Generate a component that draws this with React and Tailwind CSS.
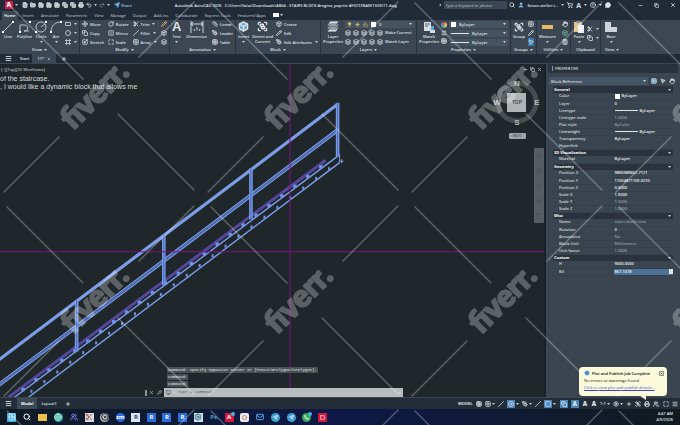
import React from 'react';
import {
  Search, User, ShoppingCart, MessageCircle, Minus, Copy, X, Menu, Plus, Wrench, Settings,
  Send, File, FolderOpen, Save, Printer, Undo2, Redo2, Move, RotateCw, FlipHorizontal, Scaling,
  Scissors, Grid2x2, Grid3x3, Pencil, Layers, Sun, Lightbulb, LockOpen, Clipboard, Ruler, Maximize,
  Group, Box, Hand, Square, Table, Circle, Globe, Users, Monitor, Mail, Phone, Disc, Frame,
  CircleHelp, Calculator, PenTool, Slash, RectangleHorizontal, MousePointer2, Image, Info,
} from 'lucide-react';

const Caret = ({ className = '' }) => (
  <svg viewBox="0 0 6 4" className={`w-[3px] h-[2px] shrink-0 fill-[#c6cfd5] ${className}`}>
    <path d="M0 0h6L3 4z" />
  </svg>
);

const Tiny = ({ icon: Icon, className = 'size-[6px]' }) => (
  <Icon strokeWidth={3} className={`shrink-0 ${className}`} />
);

const quickAccess = [File, FolderOpen, Save, Save, Save, Copy, Copy, Printer];

/* Title bar with quick access tools, file name and account area */
const TitleBar = () => (
  <header className="flex items-center h-[10px] pl-[5px] pr-[4px] bg-[#212b37]">
    <button aria-label="Application menu" className="w-[8px] h-[8px] bg-[#d9154a] text-white text-[7px] leading-[8px] font-bold text-center">A</button>
    <Caret className="ml-[2px]" />
    <div className="flex items-center gap-[2px] ml-[4px] text-[#dbe1e4]">
      {quickAccess.map((icon, i) => (
        <button key={i} aria-label={`Quick tool ${i + 1}`}><Tiny icon={icon} className="size-[6px] fill-[#aab4ba]" /></button>
      ))}
      <button aria-label="Undo"><Tiny icon={Undo2} /></button>
      <Caret />
      <button aria-label="Redo" className="text-[#7d8890]"><Tiny icon={Redo2} /></button>
      <Caret />
    </div>
    <button className="flex items-center gap-[1px] ml-[4px] text-[#8fc4e8]">
      <Send className="size-[6px] fill-[#6fb7e8] text-[#6fb7e8]" />Share
    </button>
    <div className="flex-1 flex justify-center gap-[3px] whitespace-nowrap text-[#dfe4e8]">
      <span>Autodesk AutoCAD 2026</span>
      <span>C:\Users\faisa\Downloads\AB04 - STAIRS BLOCK #regina_papritz #F0722BA5E1303\11.dwg</span>
    </div>
    <Caret className="-rotate-90 mr-[2px]" />
    <input aria-label="Search" placeholder="Type a keyword or phrase" className="w-[63px] h-[8px] px-[1px] bg-[#3b4754] italic placeholder:text-[#9ca7b0]" />
    <div className="flex items-center gap-[3px] ml-[2px] text-[#dbe1e4]">
      <Tiny icon={Search} />
      <User className="size-[6px] fill-[#8cc4ee] text-[#8cc4ee]" />
      <span>faizan.atelier.i...</span>
      <Caret />
      <Tiny icon={ShoppingCart} />
      <span className="text-[7px] font-bold leading-none">A</span>
      <Caret />
      <Tiny icon={CircleHelp} />
      <Caret />
      <Tiny icon={MessageCircle} className="size-[6px] fill-[#dbe1e4]" />
    </div>
    <div className="flex items-center gap-[11px] ml-[27px] text-[#e5eaed]">
      <button aria-label="Minimize"><Tiny icon={Minus} className="size-[5px]" /></button>
      <button aria-label="Restore"><Tiny icon={Copy} className="size-[5px]" /></button>
      <button aria-label="Close"><Tiny icon={X} className="size-[6px]" /></button>
    </div>
  </header>
);

const menus = ['Insert', 'Annotate', 'Parametric', 'View', 'Manage', 'Output', 'Add-ins', 'Collaborate', 'Express Tools', 'Featured Apps'];

const MenuTabs = () => (
  <nav className="flex items-center gap-[7px] h-[10px] pl-[2px] bg-[#212b37] text-[#a3adb6]">
    <button className="h-[9px] px-[2px] self-end bg-[#3b4754] text-white -mr-[2px]">Home</button>
    {menus.map((m) => <button key={m}>{m}</button>)}
    <button aria-label="Ribbon display" className="flex items-center gap-[1px]">
      <span className="w-[6px] h-[4px] bg-white" /><Caret />
    </button>
  </nav>
);

const Panel = ({ title, children, caret = true }) => (
  <section className="flex flex-col min-w-0 border-r border-[#29333e]">
    <div className="flex h-[26px] items-center justify-between px-[2px] gap-[2px]">{children}</div>
    <h2 className="flex items-center justify-center gap-[2px] h-[7px]">{title}{caret && <Caret />}</h2>
  </section>
);

const BigTool = ({ label, children, caret }) => (
  <button className="flex flex-col items-center h-[24px] gap-[2px] whitespace-pre leading-[5px] text-center">
    <span className="h-[11px] flex items-center">{children}</span>
    {label}
    {caret && <Caret />}
  </button>
);

const SmallTool = ({ icon, label, caret }) => (
  <button aria-label={label || 'Tool'} className="flex items-center gap-[2px] h-[8px] whitespace-nowrap">
    <Tiny icon={icon} />{label}{caret && <Caret className="ml-[1px]" />}
  </button>
);

const Column = ({ children }) => <div className="flex flex-col items-start gap-[1px]">{children}</div>;

const ShapeIcon = ({ kind }) => (
  <svg viewBox="0 0 12 12" className="size-[12px] fill-none stroke-[#bcc6cc]">
    {kind === 'line' && <path d="M1 11 11 1" />}
    {kind === 'poly' && <path d="M1 11V4h4c5 0 5 6 0 6h5" />}
    {kind === 'circle' && <><circle cx="6" cy="6" r="5" /><path d="M6 6l4-3" /></>}
    {kind === 'arc' && <path d="M1 11C1 5 5 1 11 1" />}
    <g className="fill-white stroke-none">
      <rect x="0" y="10" width="2" height="2" /><rect x="10" y="0" width="2" height="2" />
    </g>
  </svg>
);

const Dropdown = ({ label, children }) => (
  <div className="flex items-center h-[7px] w-full bg-[#465360] pl-[2px] gap-[3px]">
    {children}
    <select aria-label={label} className="flex-1 min-w-0 appearance-none bg-transparent"><option>{label === 'Layer' ? '0' : 'ByLayer'}</option></select>
    <Caret className="mr-[2px]" />
  </div>
);

const Ribbon = () => (
  <div className="grid grid-cols-[80fr_90fr_66fr_85fr_96fr_94fr_26fr_34fr_30fr_79fr] h-[34px] bg-[#3b4652] text-[#dde3e7]">
    <Panel title="Draw">
      <BigTool label="Line"><ShapeIcon kind="line" /></BigTool>
      <BigTool label="Polyline"><ShapeIcon kind="poly" /></BigTool>
      <BigTool label="Circle" caret><ShapeIcon kind="circle" /></BigTool>
      <BigTool label="Arc" caret><ShapeIcon kind="arc" /></BigTool>
      <Column>
        <SmallTool icon={RectangleHorizontal} caret />
        <SmallTool icon={Circle} caret />
        <SmallTool icon={Frame} caret />
      </Column>
    </Panel>
    <Panel title="Modify">
      <Column>
        <SmallTool icon={Move} label="Move" />
        <SmallTool icon={Copy} label="Copy" />
        <SmallTool icon={Scaling} label="Stretch" />
      </Column>
      <Column>
        <SmallTool icon={RotateCw} label="Rotate" />
        <SmallTool icon={FlipHorizontal} label="Mirror" />
        <SmallTool icon={Maximize} label="Scale" />
      </Column>
      <Column>
        <SmallTool icon={Scissors} label="Trim" caret />
        <SmallTool icon={Slash} label="Fillet" caret />
        <SmallTool icon={Grid2x2} label="Array" caret />
      </Column>
      <Column>
        <span className="text-[#f2b865]"><SmallTool icon={Pencil} /></span>
        <SmallTool icon={Box} />
        <SmallTool icon={Layers} />
      </Column>
    </Panel>
    <Panel title="Annotation">
      <BigTool label="Text" caret><span className="font-['Liberation_Sans',sans-serif] text-[13px] font-bold leading-[14px]">A</span></BigTool>
      <BigTool label="Dimension">
        <svg viewBox="0 0 14 12" className="w-[14px] h-[12px] fill-none stroke-[#cdd5da]">
          <path d="M1 0v12M13 0v12M1 3h12M3 1 1 3l2 2M11 1l2 2-2 2M4 8l1 2M7 6v3M10 8l-1 2" />
        </svg>
      </BigTool>
      <Column>
        <SmallTool icon={Ruler} label="Linear" />
        <SmallTool icon={PenTool} label="Leader" />
        <SmallTool icon={Table} label="Table" />
      </Column>
    </Panel>
    <Panel title="Block">
      <BigTool label="Insert" caret><Tiny icon={Box} className="size-[11px] fill-[#6aa9d4]" /></BigTool>
      <BigTool label={'Detect and\nConvert'}><Tiny icon={Group} className="size-[11px]" /></BigTool>
      <Column>
        <SmallTool icon={Box} label="Create" />
        <SmallTool icon={Pencil} label="Edit" />
        <SmallTool icon={PenTool} label="Edit Attributes" caret />
      </Column>
    </Panel>
    <Panel title="Layers">
      <BigTool label={'Layer\nProperties'}>
        <svg viewBox="0 0 12 12" className="size-[12px] fill-[#d6dde1] stroke-[#3b4652]">
          <path d="M3 6h9l-3 5H0zM3 3h9L9 8H0zM3 0h9L9 5H0z" strokeWidth=".8" />
        </svg>
      </BigTool>
      <div className="flex-1 flex flex-col gap-[1px]">
        <Dropdown label="Layer">
          <Lightbulb className="size-[5px] fill-[#f2d062] text-[#f2d062]" />
          <Sun className="size-[5px] fill-[#f2d062] text-[#f2d062]" />
          <LockOpen className="size-[5px] text-[#f2d062]" />
          <span className="size-[5px] bg-white" />
        </Dropdown>
        {['Make Current', 'Match Layer'].map((label) => (
          <div key={label} className="flex items-center gap-[2px]">
            {[Layers, Layers, Layers, Layers].map((icon, i) => <SmallTool key={i} icon={icon} />)}
            <SmallTool icon={Layers} label={label} />
          </div>
        ))}
      </div>
    </Panel>
    <Panel title="Properties">
      <BigTool label={'Match\nProperties'}>
        <svg viewBox="0 0 12 12" className="size-[12px]">
          <path d="M1 1h7v9H1z" fill="#d6dde1" /><path d="M2 3h5M2 5h3" stroke="#59646e" />
          <path d="M8 5h3v4H8z" fill="#5ba3d6" /><path d="M7 9h5v3H7z" fill="#d6dde1" />
        </svg>
      </BigTool>
      <div className="flex flex-col gap-[2px] items-center">
        <span className="size-[6px] rounded-full bg-[conic-gradient(#e84b4b,#f2d062,#58b868,#4a90e2,#e84b4b)]" />
        <Tiny icon={Menu} /><Tiny icon={Table} />
      </div>
      <div className="flex-1 flex flex-col gap-[2px]">
        <Dropdown label="Object color"><span className="size-[5px] bg-white" /></Dropdown>
        <Dropdown label="Lineweight"><span className="w-[18px] h-px bg-[#dde3e7]" /></Dropdown>
        <Dropdown label="Linetype"><span className="w-[18px] h-px bg-[#dde3e7]" /></Dropdown>
      </div>
    </Panel>
    <Panel title="Groups">
      <BigTool label="Group"><Tiny icon={Group} className="size-[10px]" /></BigTool>
      <Column>
        <SmallTool icon={Grid2x2} />
        <SmallTool icon={Pencil} />
        <span className="bg-[#3f7cae]"><SmallTool icon={MousePointer2} /></span>
      </Column>
    </Panel>
    <Panel title="Utilities">
      <BigTool label="Measure" caret><span className="w-[11px] h-[4px] bg-[#e6bb62]" /></BigTool>
      <Column>
        <SmallTool icon={Hand} />
        <span className="text-[#66c39a]"><SmallTool icon={Box} /></span>
        <SmallTool icon={Calculator} />
      </Column>
    </Panel>
    <Panel title="Clipboard" caret={false}>
      <BigTool label="Paste" caret>
        <svg viewBox="0 0 12 12" className="size-[12px]">
          <path d="M1 1h8v10H1z" fill="#e0c68c" /><path d="M3 0h4v2H3z" fill="#8b949b" /><path d="M5 4h6v8H5z" fill="#eef1f3" />
        </svg>
      </BigTool>
      <Column>
        <SmallTool icon={Scissors} caret />
        <SmallTool icon={Copy} caret />
      </Column>
    </Panel>
    <section className="flex flex-col items-start pl-[4px]">
      <div className="flex h-[26px] items-center">
        <BigTool label="Base" caret>
          <svg viewBox="0 0 12 10" className="w-[12px] h-[10px] fill-[#cbd3d8]"><path d="M0 0h6v5h6v5H0z" /></svg>
        </BigTool>
      </div>
      <h2 className="flex items-center gap-[2px] h-[7px]">View<Caret /></h2>
    </section>
  </div>
);

const FileTabs = () => (
  <div className="flex items-center h-[10px] pl-[5px] bg-[#212b37] border-b border-[#3b4754] text-[#dde3e7]">
    <button aria-label="File menu"><Tiny icon={Menu} className="size-[7px]" /></button>
    <button className="ml-[8px] font-semibold">Start</button>
    <div className="flex items-center gap-[3px] h-[9px] px-[5px] ml-[3px] bg-[#3b4754]">
      <button>11*</button>
      <button aria-label="Close tab"><Tiny icon={X} className="size-[4px]" /></button>
    </div>
    <button aria-label="New tab" className="ml-[5px]"><Tiny icon={Plus} className="size-[6px]" /></button>
  </div>
);

const steps = Array.from({ length: 25 }, (_, i) => i);

/* Staircase elevation with railing, in drawing coordinates */
const Staircase = () => (
  <svg viewBox="0 64 543 333" preserveAspectRatio="xMinYMin slice" className="absolute inset-0 w-full h-full fill-none">
    <path d="M325 160 8 397" stroke="#54479c" strokeWidth="3" />
    <g stroke="#7c9de6">
      <path d="M-2 360 338 103.500" strokeWidth="3.200" />
      <path d="M-2 385 337 130" strokeWidth="4" />
      <path d="M-2 385 337 130" stroke="#253c78" strokeWidth="1.600" />
      <path d="M-2 385 337 130" strokeWidth=".7" />
      <path d="M338.500 155 14 397M339 162.500 28 397" strokeWidth="1.400" />
      <path d="M337 103v53M250.500 168v51M163.500 235v50M76.500 300v51" strokeWidth="3.600" />
      <path d="M337 103v53M250.500 168v51M163.500 235v50M76.500 300v51" stroke="#4567bb" strokeWidth="1" />
      <path d="M339 154v8M338 161h5M341 159v4" />
    </g>
    {steps.map((i) => (
      <g key={i} fill="#6d92e6">
        <rect x={318.5 - i * 12.92} y={165 + i * 9.66} width="3.400" height="3.400" />
        <rect x={327.5 - i * 12.92} y={167 + i * 9.66} width="2" height="3" />
      </g>
    ))}
    <path d="M289.500 64v333M0 251.500h543" stroke="#7a1086" />
  </svg>
);

const ViewCube = () => (
  <div className="absolute right-[2px] top-[13px] w-[50px] flex flex-col items-center text-[#aeb5b8]">
    <svg viewBox="0 0 50 50" className="w-[50px] h-[50px] fill-none">
      <circle cx="25" cy="25" r="19" stroke="#454d51" strokeWidth="5" />
      <rect x="15" y="16" width="19" height="19" fill="#aeb3b5" />
      <g fill="#b7bec1" fontFamily="Liberation Sans, sans-serif" fontSize="8" fontWeight="bold" textAnchor="middle">
        <text x="25" y="9">N</text><text x="25" y="48">S</text>
        <text x="5" y="28">W</text><text x="45" y="28">E</text>
        <text x="25" y="27" fontSize="5" fill="#4a5154">TOP</text>
      </g>
    </svg>
    <button className="w-[17px] h-[6px] mt-[6px] rounded-[1px] bg-[#9da3a5] text-[#50585b] leading-[6px]">WCS</button>
  </div>
);

const CommandLine = () => (
  <div className="absolute left-[145px] right-[141px] bottom-0 font-['Liberation_Mono',monospace] font-normal">
    <div className="ml-[22px] flex flex-col items-start text-[#e2e6e8] leading-[6px] gap-[1px] mb-[1px] whitespace-nowrap">
      <p className="px-px bg-[#4a5154]">Command: Specify opposite corner or [Fence/WPolygon/CPolygon]:</p>
      <p className="px-px bg-[#4a5154]">Command:</p>
      <p className="px-px bg-[#4a5154]">Command:</p>
    </div>
    <div className="flex items-center h-[9px] text-[#b5bcbf]">
      <span className="w-[2px] h-[6px] bg-[#8c9497]" />
      <button aria-label="Close command line" className="ml-[2px]"><Tiny icon={X} className="size-[5px]" /></button>
      <button aria-label="Customize" className="ml-[3px]"><Tiny icon={Wrench} className="size-[5px]" /></button>
      <div className="flex-1 flex items-center h-full ml-[2px] px-[2px] gap-[2px] bg-[#b7bdbe] text-[#555d60]">
        <Tiny icon={Monitor} className="size-[5px]" />
        <Caret className="fill-[#555d60]" />
        <input aria-label="Command" placeholder="Type a command" className="flex-1 bg-transparent italic placeholder:text-[#5c6466]" />
        <Caret className="fill-[#555d60] rotate-180" />
      </div>
    </div>
  </div>
);

const Canvas = () => (
  <main className="relative flex-1 min-w-0 overflow-hidden bg-[#20272b]">
    <Staircase />
    <div className="relative pt-[3px] text-[#d5dadc]">
      <p className="pl-px leading-[6px] text-[#b5bbbe]">[−][Top][2D Wireframe]</p>
      <div className="mt-[2px] font-['Liberation_Sans',sans-serif] font-normal text-[7px] leading-[8px]">
        <p>of the staircase.</p>
        <p>, I would like a dynamic block that allows me</p>
      </div>
    </div>
    <div className="absolute right-[2px] top-[3px] flex gap-[2px] text-[#c9cfd2]">
      <Tiny icon={Minus} className="size-[5px]" />
      <Tiny icon={Copy} className="size-[5px]" />
      <Tiny icon={X} className="size-[5px]" />
    </div>
    <ViewCube />
    <div className="absolute right-0 top-[84px] w-[10px] h-[75px] rounded-[1px] bg-[#575e61] text-[#4b5255] flex flex-col items-center justify-around">
      {[Disc, Hand, Search, Move, Square].map((icon, i) => <Tiny key={i} icon={icon} className="size-[6px]" />)}
    </div>
    <CommandLine />
  </main>
);

const groups = [
  { name: 'General', rows: [
    ['Color', 'ByLayer', 'swatch'], ['Layer', '0'], ['Linetype', 'ByLayer', 'line'], ['Linetype scale', '1.0000', 'dim'],
    ['Plot style', 'ByColor', 'dim'], ['Lineweight', 'ByLayer', 'line'], ['Transparency', 'ByLayer'], ['Hyperlink', ''],
  ] },
  { name: '3D Visualization', rows: [['Material', 'ByLayer']] },
  { name: 'Geometry', rows: [
    ['Position X', '9890589662.7121'], ['Position Y', '11034871105.0220'], ['Position Z', '0.0000'],
    ['Scale X', '1.5000'], ['Scale Y', '1.0000', 'dim'], ['Scale Z', '1.0000', 'dim'],
  ] },
  { name: 'Misc', rows: [
    ['Name', 'stairs block new', 'dim'], ['Rotation', '0'], ['Annotative', 'No', 'dim'],
    ['Block Unit', 'Millimeters', 'dim'], ['Unit factor', '1.0000', 'dim'],
  ] },
  { name: 'Custom', rows: [['H', '9000.0000'], ['B3', '867.1078', 'active']] },
];

const PropertiesPanel = () => (
  <aside className="w-1/5 flex flex-col pl-[7px] pr-[7px] border-l-2 border-[#17212b] bg-[#3a4550] text-[#d5dbdf]">
    <h2 className="h-[9px] leading-[9px] -mx-[5px] pl-[4px] bg-[#27323d]"><span className="border-l border-[#8b959c] pl-[2px]">PROPERTIES</span></h2>
    <div className="flex items-center gap-[3px] mt-[4px] mb-[1px] -ml-[4px] -mr-[2px]">
      <div className="flex flex-1 min-w-0 items-center h-[8px] pl-[2px] pr-[2px] bg-[#465565]">
        <select aria-label="Selection" className="flex-1 min-w-0 appearance-none"><option>Block Reference</option></select>
        <Caret />
      </div>
      <Tiny icon={Image} className="size-[6px] fill-[#569ccb]" />
      <Tiny icon={MousePointer2} className="size-[6px] fill-[#6fc59a]" />
      <Tiny icon={Hand} className="size-[6px]" />
    </div>
    <table className="w-full table-fixed border-collapse leading-[6px]">
      {groups.map((g) => (
        <tbody key={g.name}>
          <tr className="h-[7px] bg-[#29323d] text-white">
            <th colSpan={2} scope="colgroup" className="p-0 text-left font-bold">
              <div className="flex items-center justify-between pl-px pr-[2px]">{g.name}<Caret /></div>
            </th>
          </tr>
          {g.rows.map(([label, value, kind]) => (
            <tr key={label} className="h-[7px]">
              <th scope="row" className="w-1/2 p-0 pl-[6px] text-left font-semibold border-b border-[#34404a] whitespace-nowrap">{label}</th>
              <td className={`p-0 pl-px border-b border-l border-[#34404a] whitespace-nowrap ${kind === 'dim' ? 'text-[#929da5]' : 'text-[#eef1f3]'} ${kind === 'active' ? 'bg-[#4c7298]' : ''}`}>
                <div className="flex items-center gap-[2px]">
                  {kind === 'swatch' && <span className="size-[5px] bg-white" />}
                  {kind === 'line' && <span className="w-[23px] h-px bg-[#dfe4e7]" />}
                  {value}
                  {kind === 'active' && <span className="ml-auto w-[4px] h-[5px] bg-[#dfe4e7]" />}
                </div>
              </td>
            </tr>
          ))}
        </tbody>
      ))}
    </table>
  </aside>
);

const statusTools = [
  { icon: Grid3x3 }, { icon: Grid2x2, caret: true }, { icon: Slash }, { icon: Disc, on: true, caret: true },
  { icon: PenTool, caret: true }, { icon: Slash }, { icon: Square, on: true, caret: true }, { icon: Copy, on: true },
  { text: 'A', on: true }, { text: 'A' }, { text: 'A' }, { label: '1:1', caret: true }, { icon: Settings, caret: true },
  { icon: Plus }, { icon: Group }, { icon: Printer }, { icon: Users }, { icon: Maximize }, { icon: Menu },
];

const StatusBar = () => (
  <footer className="relative flex items-center h-[12px] pl-[5px] pr-[2px] bg-[#222d37] border-t border-[#3a454f] text-[#dce2e6]">
    <button aria-label="Layouts"><Tiny icon={Menu} className="size-[7px]" /></button>
    <button className="h-full px-[4px] ml-[5px] bg-[#3c4853] font-bold text-white">Model</button>
    <button className="ml-[4px]">Layout1</button>
    <button aria-label="Add layout" className="ml-[8px]"><Tiny icon={Plus} className="size-[6px]" /></button>
    <div className="ml-auto w-[220px] flex items-center justify-between">
      <button className="font-bold">MODEL</button>
      {statusTools.map((t, i) => (
        <span key={i} className="flex items-center gap-[1px]">
          <button aria-label={`Status tool ${i + 1}`} className={t.on ? 'p-px bg-[#4a86be]' : ''}>
            {t.icon && <Tiny icon={t.icon} className="size-[6px]" />}
            {t.text && <b className="block w-[6px] text-[6px] leading-[6px]">{t.text}</b>}
            {t.label}
          </button>
          {t.caret && <Caret />}
        </span>
      ))}
    </div>
    <div role="status" className="absolute right-[13px] bottom-[13px] w-[88px] h-[29px] pl-[5px] pr-[3px] pt-[3px] rounded-[4px] bg-[#fbfbdc] text-[#4d4d42]">
      <div className="flex items-center">
        <Info className="size-[6px] fill-[#2479c4] text-white" />
        <strong className="ml-[2px] flex-1 font-semibold whitespace-nowrap text-black">Plot and Publish Job Complete</strong>
        <button aria-label="Dismiss" className="border border-[#99998c] text-black"><X className="size-[3px]" strokeWidth={4} /></button>
      </div>
      <p className="mt-[2px] leading-[6px]">No errors or warnings found</p>
      <a href="#details" className="block mt-[1px] leading-[6px] font-normal underline text-[#3b44d6] whitespace-nowrap">Click to view plot and publish details...</a>
      <svg viewBox="0 0 8 5" className="absolute left-[60px] top-[28px] w-[8px] h-[5px] fill-[#fbfbdc]"><path d="M0 0h7v5z" /></svg>
    </div>
  </footer>
);

const apps = [
  { name: 'Start', cls: 'bg-[#3ba7dd] text-[#bfe8fa]', icon: Grid2x2 },
  { name: 'Search', cls: 'text-white', icon: Search },
  { name: 'Files', cls: 'bg-[#eebf4c] text-[#eebf4c]', short: true },
  { name: 'Edge', cls: 'bg-[#2fa3b5] text-[#9fe0c0] rounded-full', icon: Globe },
  { name: 'Teams', cls: 'text-[#7a76e0]', icon: Users },
  { name: 'Snip', cls: 'bg-[#d8dde0] text-[#b06565]', icon: Scissors },
  { name: 'Recorder', cls: 'bg-[#b9bcbe] text-[#2a2d30] rounded-full', icon: Disc },
  { name: 'Zoom', cls: 'bg-[#2d6be2] text-white rounded-full', text: 'zm' },
  { name: 'Revit', cls: 'bg-[#dce4ee] text-[#1b3f77]', text: 'R' },
  { name: 'Revit 2023', cls: 'bg-[#2c6cd6] text-white', text: 'R' },
  { name: 'Revit 2024', cls: 'bg-[#2c6cd6] text-white', text: 'R' },
  { name: 'Revit 2025', cls: 'bg-[#2c6cd6] text-white', text: 'R' },
  { name: 'Assistant', cls: 'bg-[#cfe3e8] text-[#2f6f86]', icon: Settings },
  { name: 'Photoshop', cls: 'text-[#4f9cc4]', text: 'Ps' },
  { name: 'AutoCAD', cls: 'bg-[#d3173f] text-white', text: 'A', badge: true },
  { name: 'Capture', cls: 'bg-[#e9eaec] text-[#d03e3e] rounded-[2px]', icon: Circle, small: true },
  { name: 'Mail', cls: 'text-[#4da0e8]', icon: Mail },
  { name: 'Bird', cls: 'bg-[#3b9fd0] text-white rounded-full', icon: Send, small: true },
  { name: 'Bird 2', cls: 'bg-[#3b9fd0] text-white rounded-full', icon: Send, small: true },
  { name: 'WhatsApp', cls: 'bg-[#35a85c] text-white rounded-full', icon: Phone, small: true, badge: true },
  { name: 'AnyDesk', cls: 'bg-[#d3173f] text-white', icon: Square, small: true },
];

const Taskbar = () => (
  <div className="flex items-center justify-between h-[16px] pl-[7px] pr-[7px] bg-linear-to-r from-[#101a24] via-[#0e1847] to-[#121a20]">
    <div className="flex items-center justify-between w-[320px]">
      {apps.map((a) => (
        <button key={a.name} aria-label={a.name} className={`relative flex items-center justify-center w-[9px] font-bold text-[6px] leading-none ${a.short ? 'h-[7px]' : 'h-[9px]'} ${a.cls}`}>
          {a.icon && <Tiny icon={a.icon} className={a.small ? 'size-[5px]' : 'size-[8px]'} />}
          {a.text}
          {a.badge && <span className="absolute -top-px -right-px size-[4px] rounded-full bg-[#4fb3d9]" />}
        </button>
      ))}
    </div>
    <time className="text-right leading-[6px] text-[#e6eaec]">4:47 AM<br />4/5/2026</time>
  </div>
);

const Watermark = () => (
  <svg aria-hidden="true" className="absolute inset-0 w-full h-full pointer-events-none">
    <defs>
      <pattern id="mark" width="204" height="204" patternUnits="userSpaceOnUse">
        <path d="M118 114l76 76M59 137 4 192M7 3l76 76M194 2l-55 55" className="fill-none stroke-white" strokeWidth="1.500" strokeLinecap="round" />
        <text transform="translate(73 131) rotate(-45)" fontFamily="Lato, sans-serif" fontWeight="900" fontSize="31" strokeWidth="1.800" className="fill-white stroke-white">fiverr.</text>
      </pattern>
    </defs>
    <rect width="100%" height="100%" fill="url(#mark)" opacity=".27" />
  </svg>
);

export default function App() {
  return (
    <div className="relative min-h-screen flex flex-col overflow-hidden font-['Open_Sans',sans-serif] font-semibold text-[4px] leading-[5px] text-[#dde3e7]">
      <TitleBar />
      <MenuTabs />
      <Ribbon />
      <FileTabs />
      <div className="flex-1 flex">
        <Canvas />
        <PropertiesPanel />
      </div>
      <StatusBar />
      <Taskbar />
      <Watermark />
    </div>
  );
}
